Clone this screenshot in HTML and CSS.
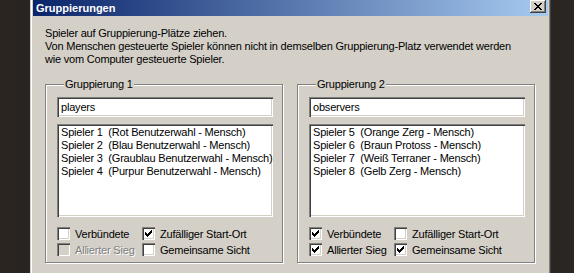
FILE: index.html
```html
<!DOCTYPE html>
<html lang="de">
<head>
    <meta charset="UTF-8">
    <title>Gruppierungen</title>
    <link rel="stylesheet" href="styles.css">
</head>
<body>
    <div class="window">
        <div class="title-bar">
            <span class="title">Gruppierungen</span>
            <span class="close-button">
                <svg width="8" height="7" viewBox="0 0 8 7" shape-rendering="crispEdges"><path d="M0 0h2v1H0zM6 0h2v1H6zM1 1h2v1H1zM5 1h2v1H5zM2 2h4v1H2zM3 3h2v1H3zM2 4h4v1H2zM1 5h2v1H1zM5 5h2v1H5zM0 6h2v1H0zM6 6h2v1H6z" fill="#000"/></svg>
            </span>
        </div>

        <div class="content">
            <p class="intro">
                Spieler auf Gruppierung-Plätze ziehen.<br>
                Von Menschen gesteuerte Spieler können nicht in demselben Gruppierung-Platz verwendet werden<br>
                wie vom Computer gesteuerte Spieler.
            </p>

            <div class="groups">
                <fieldset class="group">
                    <legend>Gruppierung 1</legend>
                    <div class="name-field">players</div>
                    <ul class="player-list">
                        <li>Spieler 1&nbsp; (Rot Benutzerwahl - Mensch)</li>
                        <li>Spieler 2&nbsp; (Blau Benutzerwahl - Mensch)</li>
                        <li>Spieler 3&nbsp; (Graublau Benutzerwahl - Mensch)</li>
                        <li>Spieler 4&nbsp; (Purpur Benutzerwahl - Mensch)</li>
                    </ul>
                    <div class="options">
                        <label class="option"><span class="checkbox"></span>Verbündete</label>
                        <label class="option"><span class="checkbox checked"><svg width="7" height="7" viewBox="0 0 7 7" shape-rendering="crispEdges"><path d="M0 2h1v3H0zM1 3h1v3H1zM2 4h1v3H2zM3 3h1v3H3zM4 2h1v3H4zM5 1h1v3H5zM6 0h1v3H6z" fill="#000"/></svg></span>Zufälliger Start-Ort</label>
                        <label class="option disabled"><span class="checkbox"></span>Allierter Sieg</label>
                        <label class="option"><span class="checkbox"></span>Gemeinsame Sicht</label>
                    </div>
                </fieldset>

                <fieldset class="group">
                    <legend>Gruppierung 2</legend>
                    <div class="name-field">observers</div>
                    <ul class="player-list">
                        <li>Spieler 5&nbsp; (Orange Zerg - Mensch)</li>
                        <li>Spieler 6&nbsp; (Braun Protoss - Mensch)</li>
                        <li>Spieler 7&nbsp; (Weiß Terraner - Mensch)</li>
                        <li>Spieler 8&nbsp; (Gelb Zerg - Mensch)</li>
                    </ul>
                    <div class="options">
                        <label class="option"><span class="checkbox checked"><svg width="7" height="7" viewBox="0 0 7 7" shape-rendering="crispEdges"><path d="M0 2h1v3H0zM1 3h1v3H1zM2 4h1v3H2zM3 3h1v3H3zM4 2h1v3H4zM5 1h1v3H5zM6 0h1v3H6z" fill="#000"/></svg></span>Verbündete</label>
                        <label class="option"><span class="checkbox"></span>Zufälliger Start-Ort</label>
                        <label class="option"><span class="checkbox checked"><svg width="7" height="7" viewBox="0 0 7 7" shape-rendering="crispEdges"><path d="M0 2h1v3H0zM1 3h1v3H1zM2 4h1v3H2zM3 3h1v3H3zM4 2h1v3H4zM5 1h1v3H5zM6 0h1v3H6z" fill="#000"/></svg></span>Allierter Sieg</label>
                        <label class="option"><span class="checkbox checked"><svg width="7" height="7" viewBox="0 0 7 7" shape-rendering="crispEdges"><path d="M0 2h1v3H0zM1 3h1v3H1zM2 4h1v3H2zM3 3h1v3H3zM4 2h1v3H4zM5 1h1v3H5zM6 0h1v3H6z" fill="#000"/></svg></span>Gemeinsame Sicht</label>
                    </div>
                </fieldset>
            </div>
        </div>
    </div>
</body>
</html>
```

FILE: styles.css
```css
body {
    margin: 0;
    height: 100vh;
    overflow: hidden;
    display: flex;
    padding-left: 30px;
    background: linear-gradient(90deg, #2a2521, #1f1b19 60%, #2b2622);
    font-family: 'Liberation Sans', Arial, sans-serif;
    font-size: 11px;
    letter-spacing: -0.2px;
    color: #000;
}

.window {
    width: 521px;
    height: 100%;
    box-sizing: border-box;
    padding: 0 3px;
    background: #d4d0c8;
    box-shadow: inset 1px 0 #d4d0c8, inset 2px 0 #fff, inset -1px 0 #404040, inset -2px 0 #808080;
}

.title-bar {
    height: 16px;
    display: flex;
    align-items: flex-start;
    padding-left: 3px;
    background: linear-gradient(90deg, #0a246a, #a6caf0);
}

.title {
    font-weight: bold;
    color: #fff;
    line-height: 16px;
    letter-spacing: 0;
}

.close-button {
    margin-left: auto;
    margin-right: 2px;
    width: 16px;
    height: 13px;
    display: flex;
    align-items: center;
    justify-content: center;
    background: #d4d0c8;
    box-shadow: inset -1px -1px #404040, inset 1px 1px #fff, inset -2px -2px #808080;
}

.content {
    padding: 11px 13px 0 12px;
}

.intro {
    margin: 0 0 12px;
    line-height: 13px;
}

.groups {
    display: flex;
    gap: 14px;
}

.group {
    flex: none;
    width: 238px;
    min-width: 0;
    box-sizing: border-box;
    margin: 0;
    padding: 0 9px 6px 11px;
    border: 1px solid #808080;
    box-shadow: inset 1px 1px #fff, 1px 1px #fff;
}

.group legend {
    margin-left: 7px;
    padding: 0 1px;
    line-height: 13px;
    background: #d4d0c8;
}

.name-field {
    margin-top: 6px;
    height: 20px;
    box-sizing: border-box;
    padding: 0 4px;
    line-height: 20px;
    background: #fff;
    box-shadow: inset 1px 1px #808080, inset 2px 2px #404040, inset -1px -1px #fff, inset -2px -2px #d4d0c8;
}

.player-list {
    list-style: none;
    margin: 7px 0 0;
    padding: 2px 4px;
    height: 93px;
    box-sizing: border-box;
    line-height: 13px;
    white-space: nowrap;
    overflow: hidden;
    background: #fff;
    box-shadow: inset 1px 1px #808080, inset 2px 2px #404040, inset -1px -1px #fff, inset -2px -2px #d4d0c8;
}

.options {
    margin-top: 10px;
    display: grid;
    grid-template-columns: 85px auto;
    row-gap: 3px;
}

.option {
    display: flex;
    align-items: center;
    gap: 5px;
    height: 13px;
    white-space: nowrap;
}

.checkbox {
    width: 13px;
    height: 13px;
    flex: none;
    display: flex;
    align-items: center;
    justify-content: center;
    background: #fff;
    box-shadow: inset 1px 1px #808080, inset 2px 2px #404040, inset -1px -1px #fff, inset -2px -2px #d4d0c8;
}

.option.disabled {
    color: #808080;
    text-shadow: 1px 1px #fff;
}

.option.disabled .checkbox {
    background: #d4d0c8;
}
```
